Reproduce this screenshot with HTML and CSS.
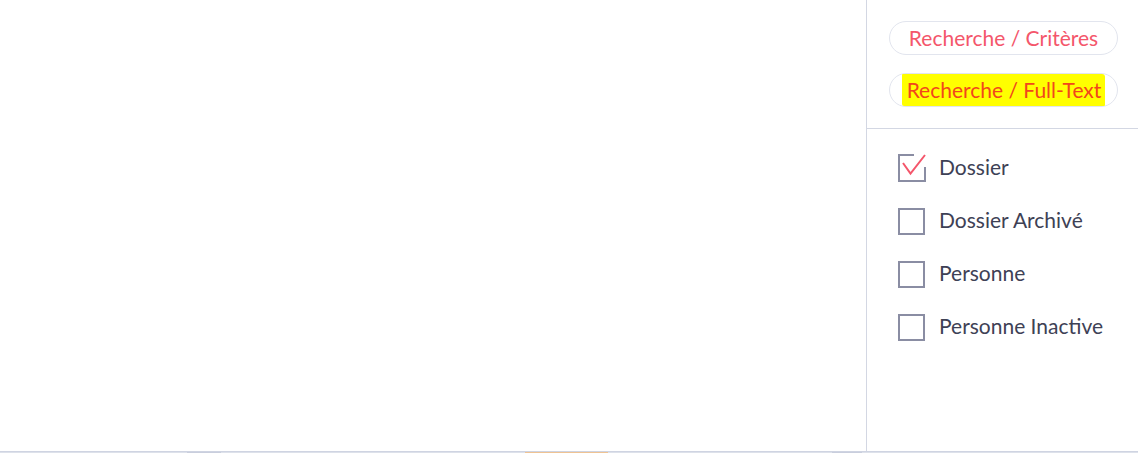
FILE: index.html
```html
<!DOCTYPE html>
<html lang="fr">
  <head>
    <meta charset="UTF-8" />
    <meta name="viewport" content="width=device-width, initial-scale=1.0" />
    <title>Recherche</title>
    <link rel="stylesheet" href="styles.css">
  </head>
  <body>
    <div class="page">
      <div class="main"></div>
      <aside class="sidebar">
        <div class="modes">
          <button class="mode">Recherche / Critères</button>
          <button class="mode"><mark class="found">Recherche / Full-Text</mark></button>
        </div>
        <ul class="types">
          <li class="type">
            <svg class="box" width="28" height="28" viewBox="0 0 28 28">
              <path d="M16 1 H1 V27 H27 V13" fill="none" stroke="#8a8da3" stroke-width="2" />
              <path d="M5 9 L12.5 19.5 L27 1" fill="none" stroke="#f4566b" stroke-width="2" />
            </svg>
            <span>Dossier</span>
          </li>
          <li class="type"><span class="box empty"></span><span>Dossier Archivé</span></li>
          <li class="type"><span class="box empty"></span><span>Personne</span></li>
          <li class="type"><span class="box empty"></span><span>Personne Inactive</span></li>
        </ul>
      </aside>
    </div>
    <div class="footer">
      <span class="tab tab-1"></span>
      <span class="tab tab-2"></span>
      <span class="tab tab-3"></span>
    </div>
  </body>
</html>
```

FILE: styles.css
```css
* {
  margin: 0;
  padding: 0;
  box-sizing: border-box;
  font-family: Lato, "Noto Sans", sans-serif;
}

html,
body {
  background: #fff;
  height: 100%;
  overflow: hidden;
}

.page {
  display: flex;
  height: 451px;
}

.main {
  width: 867px;
  border-right: 1px solid #d3d7e3;
}

.sidebar {
  flex: 1;
}

.modes {
  display: flex;
  flex-direction: column;
  gap: 18px;
  padding: 21px 20px 21px 22px;
  border-bottom: 1px solid #d3d7e3;
}

.mode {
  height: 34px;
  width: 229px;
  border: 1px solid #e2e5ee;
  border-radius: 17px;
  background: #fff;
  color: #f4566b;
  font-size: 21px;
  line-height: 1;
  padding-bottom: 2px;
  cursor: pointer;
}

.found {
  background: #ffff00;
  color: #f2461c;
  padding: 3px 4px 4px 5px;
  border-radius: 1px 3px 1px 2px;
}

.types {
  list-style: none;
  padding: 25px 0 0 31px;
  display: flex;
  flex-direction: column;
  gap: 25px;
}

.type {
  display: flex;
  align-items: center;
  gap: 13px;
  height: 28px;
  color: #3e4155;
  font-size: 21px;
  line-height: 24px;
}

.type span:last-child {
  margin-top: -3px;
}

.box {
  width: 28px;
  height: 28px;
  flex: none;
}

.box.empty {
  width: 27px;
  height: 27px;
  border: 2px solid #8a8da3;
  margin-right: 1px;
}

.footer {
  position: relative;
  height: 2px;
  border-top: 1px solid #cfd4e2;
  background: #dde1ea;
}

.tab {
  position: absolute;
  top: 0;
  height: 1px;
}

.tab-1 {
  left: 187px;
  width: 34px;
  background: #c9cedd;
}

.tab-2 {
  left: 525px;
  width: 83px;
  background: #efc393;
}

.tab-3 {
  left: 832px;
  width: 30px;
  background: #c9cedd;
}
```
